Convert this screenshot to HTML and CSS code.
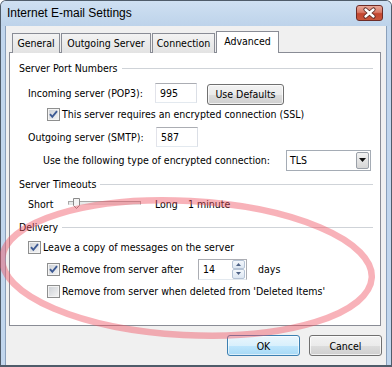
FILE: index.html
```html
<!DOCTYPE html>
<html lang="en">
<head>
    <meta charset="UTF-8">
    <meta name="viewport" content="width=device-width, initial-scale=1.0">
    <title>Internet E-mail Settings</title>
    <link rel="stylesheet" href="styles.css">
</head>
<body>
    <div class="window">
        <div class="titlebar">
            <span class="title">Internet E-mail Settings</span>
            <span class="close">
                <svg width="27" height="16" viewBox="0 0 27 16">
                    <path d="M9.5 4.5 L17.5 11.5 M17.5 4.5 L9.5 11.5" stroke="#5a2a24" stroke-width="4.2" stroke-linecap="round"/>
                    <path d="M9.5 4.5 L17.5 11.5 M17.5 4.5 L9.5 11.5" stroke="#fff" stroke-width="2.4" stroke-linecap="round"/>
                </svg>
            </span>
        </div>
        <div class="client">
            <div class="tabs">
                <div class="tab tab-general">General</div>
                <div class="tab tab-outgoing">Outgoing Server</div>
                <div class="tab tab-connection">Connection</div>
                <div class="tab tab-advanced active">Advanced</div>
            </div>
            <div class="panel">
                <div class="group-title first"><span>Server Port Numbers</span></div>

                <div class="row row-incoming">
                    <span class="field-label">Incoming server (POP3):</span>
                    <span class="textbox port">995</span>
                    <span class="button defaults">Use Defaults</span>
                </div>

                <div class="row row-check level2 row-ssl">
                    <span class="checkbox checked"><svg width="11" height="11" viewBox="0 0 11 11"><path d="M2 5.2 L4.3 7.8 L9 2.2" fill="none" stroke="#3d5a94" stroke-width="1.9"/></svg></span>
                    <span class="check-label">This server requires an encrypted connection (SSL)</span>
                </div>

                <div class="row row-outgoing">
                    <span class="field-label smtp">Outgoing server (SMTP):</span>
                    <span class="textbox port">587</span>
                </div>

                <div class="row row-encryption">
                    <span class="enc-label">Use the following type of encrypted connection:</span>
                    <span class="select">
                        <span class="select-value">TLS</span>
                        <span class="select-arrow"><svg width="7" height="4" viewBox="0 0 7 4"><path d="M0 0 H7 L3.5 4 Z" fill="#111"/></svg></span>
                    </span>
                </div>

                <div class="group-title timeouts"><span>Server Timeouts</span></div>

                <div class="row row-timeout">
                    <span class="short-label">Short</span>
                    <span class="slider">
                        <span class="slider-track"></span>
                        <svg class="slider-thumb" width="7" height="11" viewBox="0 0 7 11"><path d="M0.5 0.5 H6.5 V7.5 L3.5 10.5 L0.5 7.5 Z" fill="#f4f4f4" stroke="#8a8a8a"/></svg>
                    </span>
                    <span class="long-label">Long</span>
                    <span>1 minute</span>
                </div>

                <div class="group-title delivery"><span>Delivery</span></div>

                <div class="row row-check level1 row-leave">
                    <span class="checkbox checked"><svg width="11" height="11" viewBox="0 0 11 11"><path d="M2 5.2 L4.3 7.8 L9 2.2" fill="none" stroke="#3d5a94" stroke-width="1.9"/></svg></span>
                    <span class="check-label">Leave a copy of messages on the server</span>
                </div>

                <div class="row row-check level2 row-remove">
                    <span class="checkbox checked"><svg width="11" height="11" viewBox="0 0 11 11"><path d="M2 5.2 L4.3 7.8 L9 2.2" fill="none" stroke="#3d5a94" stroke-width="1.9"/></svg></span>
                    <span class="check-label remove-label">Remove from server after</span>
                    <span class="spinbox">
                        <span class="spin-value">14</span>
                        <span class="spin-buttons">
                            <span class="spin-btn"><svg width="5" height="3" viewBox="0 0 5 3"><path d="M0 3 L2.5 0 L5 3 Z" fill="#4d6185"/></svg></span>
                            <span class="spin-btn"><svg width="5" height="3" viewBox="0 0 5 3"><path d="M0 0 H5 L2.5 3 Z" fill="#4d6185"/></svg></span>
                        </span>
                    </span>
                    <span class="days">days</span>
                </div>

                <div class="row row-check level2 row-deleted">
                    <span class="checkbox"></span>
                    <span class="check-label">Remove from server when deleted from 'Deleted Items'</span>
                </div>
            </div>
            <div class="buttons">
                <span class="button default">OK</span>
                <span class="button">Cancel</span>
            </div>
        </div>
    </div>
    <svg class="annotation" width="392" height="367" viewBox="0 0 392 367">
        <ellipse cx="187" cy="268" rx="185" ry="67" transform="rotate(3 187 268)" fill="none" stroke="rgba(240, 85, 100, 0.45)" stroke-width="6.5"/>
    </svg>
</body>
</html>
```

FILE: styles.css
```css
body {
    margin: 0;
    padding: 0;
    position: relative;
    width: 392px;
    height: 367px;
    overflow: hidden;
    background: #fff;
    font-family: "DejaVu Sans Condensed", "DejaVu Sans", sans-serif;
    font-size: 10.5px;
    color: #000;
}

.window {
    box-sizing: border-box;
    width: 392px;
    height: 367px;
    display: flex;
    flex-direction: column;
    background: #c1d6ed;
    border: 1px solid #4f5c6a;
    border-bottom-width: 2px;
    border-radius: 6px 6px 0 0;
}

.titlebar {
    height: 25px;
    display: flex;
    align-items: flex-start;
    padding-left: 6px;
    background: linear-gradient(#cfe0f2, #bdd3ea);
    border-radius: 5px 5px 0 0;
}

.title {
    font-family: "Liberation Sans", sans-serif;
    font-size: 12px;
    line-height: 25px;
    color: #000;
}

.close {
    margin-left: auto;
    margin-right: 8px;
    margin-top: 4px;
    box-sizing: border-box;
    width: 27px;
    height: 16px;
    border: 1px solid #6d2b26;
    border-radius: 3px;
    background: linear-gradient(#e9a898 0%, #d97a68 45%, #c3452f 55%, #c8563c 100%);
    display: flex;
}

.close svg {
    margin: -1px;
}

.client {
    flex: 1;
    margin: 0 4px;
    padding: 5px 4px 0 3px;
    background: #f0f0f0;
    border-left: 1px solid #8aa0bb;
    border-right: 1px solid #8aa0bb;
}

/* tabs */

.tabs {
    display: flex;
    align-items: flex-end;
    gap: 1px;
    height: 22px;
    padding-left: 3px;
}

.tab {
    box-sizing: border-box;
    height: 20px;
    border: 1px solid #898c95;
    border-bottom: none;
    background: linear-gradient(#f3f3f3, #e3e3e3);
    text-align: center;
    line-height: 19px;
}

.tab-general { width: 48px; }
.tab-outgoing { width: 90px; }
.tab-connection { width: 63px; }

.tab-advanced {
    width: 63px;
}

.tab.active {
    height: 22px;
    line-height: 19px;
    background: #fff;
    position: relative;
    z-index: 1;
}

.panel {
    box-sizing: border-box;
    width: 372px;
    height: 274px;
    margin-top: -1px;
    padding: 7px 7px 0 9px;
    background: #fff;
    border: 1px solid #898c95;
}

/* rows */

.group-title {
    display: flex;
    align-items: center;
    height: 16px;
}

.group-title::after {
    content: "";
    flex: 1;
    margin-left: 4px;
    border-top: 1px solid #cfd3d8;
}

.group-title.timeouts { margin-top: 5px; }
.group-title.delivery { margin-top: 5px; }

.row {
    display: flex;
    align-items: center;
    padding-left: 9px;
}

.row-incoming { height: 22px; margin-top: 6px; }
.row-ssl { height: 16px; margin-top: 2px; }
.row-outgoing { height: 22px; margin-top: 4px; }
.row-encryption { height: 22px; margin-top: 1px; padding-left: 24px; }
.row-timeout { height: 20px; margin-top: 2px; }
.row-leave { height: 16px; margin-top: 4px; }
.row-remove { height: 22px; margin-top: 3px; }
.row-deleted { height: 16px; margin-top: 3px; }

.row-check.level1 { padding-left: 9px; }
.row-check.level2 { padding-left: 28px; }

.field-label { width: 127px; }
.field-label.smtp { width: 128px; }

.textbox {
    box-sizing: border-box;
    height: 20px;
    border: 1px solid #abadb3;
    border-left-color: #e2e3ea;
    border-right-color: #dbdfe6;
    border-bottom-color: #e3e9ef;
    background: #fff;
    padding-left: 4px;
    line-height: 18px;
}

.textbox.port { width: 42px; }

.button {
    box-sizing: border-box;
    height: 21px;
    display: flex;
    align-items: center;
    justify-content: center;
    border: 1px solid #707070;
    border-radius: 3px;
    background: linear-gradient(#f2f2f2 0%, #ebebeb 50%, #dddddd 51%, #cfcfcf 100%);
    box-shadow: inset 0 0 0 1px rgba(255, 255, 255, 0.7);
}

.button.defaults {
    width: 77px;
    margin-left: 10px;
    margin-top: 2px;
}

.button.default {
    border-color: #3c7fb1;
    background: linear-gradient(#eaf6fd 0%, #d9f0fc 50%, #bee6fd 51%, #a7d9f5 100%);
    box-shadow: inset 0 0 0 1px rgba(255, 255, 255, 0.6);
}

.checkbox {
    box-sizing: border-box;
    width: 13px;
    height: 13px;
    border: 1px solid #8e8f8f;
    background: linear-gradient(135deg, #cbcfd5, #f6f6f6);
    box-shadow: inset 0 0 0 1px #f4f4f4;
    flex-shrink: 0;
}

.checkbox svg {
    display: block;
    margin: 0;
}

.check-label { margin-left: 2px; }
.remove-label { width: 136px; }

.enc-label { width: 243px; }

.select {
    box-sizing: border-box;
    width: 85px;
    height: 21px;
    display: flex;
    align-items: center;
    border: 1px solid #a5acb5;
    background: #fff;
}

.select-value {
    flex: 1;
    padding-left: 3px;
}

.select-arrow {
    box-sizing: border-box;
    width: 13px;
    height: 17px;
    margin-right: 1px;
    display: flex;
    align-items: center;
    justify-content: center;
    border: 1px solid #9aa0a8;
    border-radius: 2px;
    background: linear-gradient(#f2f2f2, #d6d6d6);
}

/* slider */

.short-label { width: 40px; }

.slider {
    position: relative;
    width: 73px;
    height: 12px;
    margin-right: 14px;
}

.slider-track {
    position: absolute;
    left: 0;
    right: 0;
    top: 3px;
    height: 2px;
    border: 1px solid #a8a8a8;
    border-bottom-color: #e6e6e6;
    background: #e7eaea;
}

.slider-thumb {
    position: absolute;
    left: 5px;
    top: 0;
}

.long-label { width: 33px; }

/* spin box */

.spinbox {
    box-sizing: border-box;
    width: 49px;
    height: 21px;
    display: flex;
    border: 1px solid #abadb3;
    border-bottom-color: #e3e9ef;
    background: #fff;
}

.spin-value {
    flex: 1;
    padding-left: 4px;
    line-height: 19px;
}

.spin-buttons {
    display: flex;
    flex-direction: column;
    width: 13px;
    margin: 0 1px 0 0;
}

.spin-btn {
    box-sizing: border-box;
    flex: 1;
    display: flex;
    align-items: center;
    justify-content: center;
    border: 1px solid #b5c3d5;
    border-radius: 2px;
    background: linear-gradient(#f4f8fc, #dce6f2);
}

.days { margin-left: 11px; }

/* bottom buttons */

.buttons {
    display: flex;
    justify-content: flex-end;
    gap: 9px;
    margin-top: 9px;
}

.buttons .button {
    width: 73px;
}

.annotation {
    position: absolute;
    left: 0;
    top: 0;
    pointer-events: none;
}
```
